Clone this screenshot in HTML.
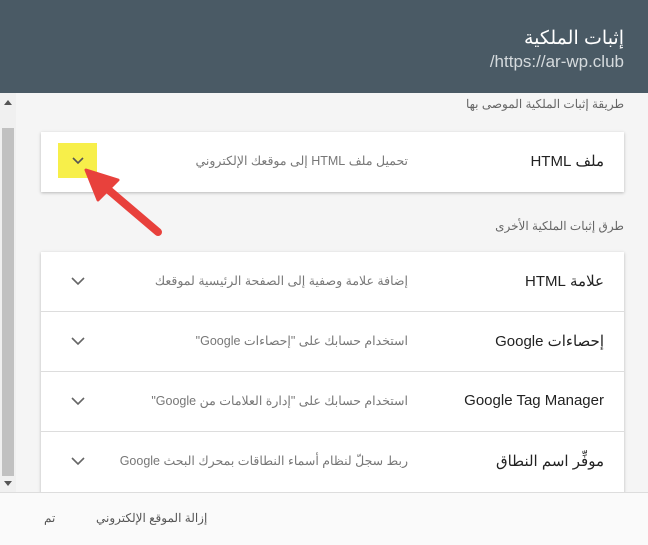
<!DOCTYPE html>
<html><head><meta charset="utf-8"><style>
*{margin:0;padding:0;box-sizing:border-box}
body{width:648px;height:545px;overflow:hidden;background:#f5f5f5;font-family:"Liberation Sans","Noto Sans CJK SC",sans-serif;position:relative}
.hdr{position:absolute;left:0;top:0;width:648px;height:93px;background:#4a5a65}
.t{position:absolute;white-space:nowrap;direction:rtl}
.card{position:absolute;left:41px;width:583px;background:#fff;box-shadow:0 1px 3px rgba(0,0,0,.25)}
.row{position:relative;height:60px;border-bottom:1px solid #ddd}
.lab{position:absolute;right:20px;top:20px;font-size:15px;color:#222;direction:rtl;white-space:nowrap}
.des{position:absolute;right:216px;top:21px;font-size:12.5px;color:#777;direction:rtl;white-space:nowrap}
.chev{position:absolute;left:30px;top:25px}
</style></head><body>
<div class="hdr"></div>
<div class="t" style="right:24px;top:27px;font-size:19px;color:#fff">إثبات الملكية</div>
<div class="t" style="right:24px;top:52px;font-size:17px;color:#d5dadd">https://ar-wp.club/</div>
<div style="position:absolute;left:0;top:93px;width:16px;height:399px;background:#f0f0f0"></div>
<div style="position:absolute;left:2px;top:128px;width:12px;height:348px;background:#c1c1c1"></div>
<div style="position:absolute;left:4px;top:100px;border:4px solid transparent;border-bottom:5px solid #555;border-top:0"></div>
<div style="position:absolute;left:4px;top:481px;border:4px solid transparent;border-top:5px solid #555;border-bottom:0"></div>
<div class="t" style="right:24px;top:97px;font-size:12px;color:#666">طريقة إثبات الملكية الموصى بها</div>
<div class="card" style="top:132px;height:60px">
<div style="position:absolute;left:17px;top:11px;width:39px;height:35px;background:#f7ef4a"></div>
<div class="lab">ملف HTML</div>
<div class="des">تحميل ملف HTML إلى موقعك الإلكتروني</div>
<svg class="chev" width="12" height="8" style="left:31px"><path d="M1 1l5 5 5-5" stroke="#555" stroke-width="1.6" fill="none"/></svg>
</div>
<div class="t" style="right:24px;top:219px;font-size:12px;color:#666">طرق إثبات الملكية الأخرى</div>
<div class="card" style="top:252px;height:245px">
<div class="row"><div class="lab">علامة HTML</div><div class="des">إضافة علامة وصفية إلى الصفحة الرئيسية لموقعك</div><svg class="chev" width="14" height="9"><path d="M1 1l6 6 6-6" stroke="#666" stroke-width="1.6" fill="none"/></svg></div>
<div class="row"><div class="lab">إحصاءات Google</div><div class="des">استخدام حسابك على "إحصاءات Google"</div><svg class="chev" width="14" height="9"><path d="M1 1l6 6 6-6" stroke="#666" stroke-width="1.6" fill="none"/></svg></div>
<div class="row"><div class="lab" style="direction:ltr">Google Tag Manager</div><div class="des">استخدام حسابك على "إدارة العلامات من Google"</div><svg class="chev" width="14" height="9"><path d="M1 1l6 6 6-6" stroke="#666" stroke-width="1.6" fill="none"/></svg></div>
<div class="row" style="border:0"><div class="lab">موفِّر اسم النطاق</div><div class="des">ربط سجلّ لنظام أسماء النطاقات بمحرك البحث Google</div><svg class="chev" width="14" height="9"><path d="M1 1l6 6 6-6" stroke="#666" stroke-width="1.6" fill="none"/></svg></div>
</div>
<div style="position:absolute;left:0;top:492px;width:648px;height:53px;background:#fafafa;border-top:1px solid #ddd"></div>
<div class="t" style="left:96px;top:511px;font-size:12px;color:#555">إزالة الموقع الإلكتروني</div>
<div class="t" style="left:44px;top:511px;font-size:12px;color:#555">تم</div>
<svg style="position:absolute;left:0;top:0" width="648" height="545">
<path d="M158 232 L104 186" stroke="#e8413c" stroke-width="8" stroke-linecap="round"/>
<path d="M86 170 L118 180 L98 200 Z" fill="#e8413c" stroke="#e8413c" stroke-width="3" stroke-linejoin="round"/>
</svg>
</body></html>
